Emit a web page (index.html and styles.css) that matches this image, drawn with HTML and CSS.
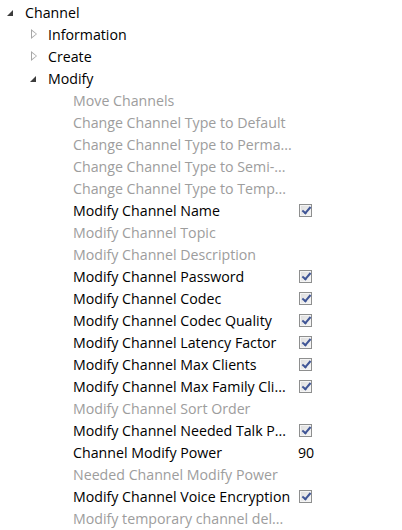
FILE: index.html
```html
<!DOCTYPE html>
<html lang="en">
<head>
  <meta charset="UTF-8" />
  <title>Permissions</title>
  <link rel="stylesheet" href="styles.css">
</head>
<body>

  <div class="tree">
    <div class="node level-0">
      <span class="arrow open"></span>
      <span class="name">Channel</span>
    </div>
    <div class="node level-1">
      <span class="arrow closed"></span>
      <span class="name">Information</span>
    </div>
    <div class="node level-1">
      <span class="arrow closed"></span>
      <span class="name">Create</span>
    </div>
    <div class="node level-1">
      <span class="arrow open"></span>
      <span class="name">Modify</span>
    </div>

    <!-- Modify permissions -->
    <div class="perm off"><span class="label">Move Channels</span></div>
    <div class="perm off"><span class="label">Change Channel Type to Default</span></div>
    <div class="perm off"><span class="label">Change Channel Type to Perma...</span></div>
    <div class="perm off"><span class="label">Change Channel Type to Semi-...</span></div>
    <div class="perm off"><span class="label">Change Channel Type to Temp...</span></div>
    <div class="perm"><span class="label">Modify Channel Name</span><span class="check"></span></div>
    <div class="perm off"><span class="label">Modify Channel Topic</span></div>
    <div class="perm off"><span class="label">Modify Channel Description</span></div>
    <div class="perm"><span class="label">Modify Channel Password</span><span class="check"></span></div>
    <div class="perm"><span class="label">Modify Channel Codec</span><span class="check"></span></div>
    <div class="perm"><span class="label">Modify Channel Codec Quality</span><span class="check"></span></div>
    <div class="perm"><span class="label">Modify Channel Latency Factor</span><span class="check"></span></div>
    <div class="perm"><span class="label">Modify Channel Max Clients</span><span class="check"></span></div>
    <div class="perm"><span class="label">Modify Channel Max Family Cli...</span><span class="check"></span></div>
    <div class="perm off"><span class="label">Modify Channel Sort Order</span></div>
    <div class="perm"><span class="label">Modify Channel Needed Talk P...</span><span class="check"></span></div>
    <div class="perm"><span class="label">Channel Modify Power</span><span class="value">90</span></div>
    <div class="perm off"><span class="label">Needed Channel Modify Power</span></div>
    <div class="perm"><span class="label">Modify Channel Voice Encryption</span><span class="check"></span></div>
    <div class="perm off"><span class="label">Modify temporary channel del...</span></div>
  </div>

</body>
</html>
```

FILE: styles.css
```css
body {
  margin: 0;
  background: #fff;
  font-family: "Open Sans", "Noto Sans", sans-serif;
  font-size: 14.2px;
  color: #000;
}
.tree {
  padding-top: 1px;
}
.node,
.perm {
  display: flex;
  align-items: center;
  height: 22px;
  white-space: nowrap;
}
.level-0 {
  padding-left: 5px;
}
.level-1 {
  padding-left: 28px;
}
.arrow {
  width: 20px;
  height: 22px;
  position: relative;
}
.arrow.closed::before {
  content: "";
  position: absolute;
  left: 3px;
  top: 6px;
  width: 0;
  height: 0;
  border-top: 5px solid transparent;
  border-bottom: 5px solid transparent;
  border-left: 6px solid #a6a6a6;
}
.arrow.closed::after {
  content: "";
  position: absolute;
  left: 4px;
  top: 8px;
  width: 0;
  height: 0;
  border-top: 3px solid transparent;
  border-bottom: 3px solid transparent;
  border-left: 4px solid #fff;
}
.arrow.open::before {
  content: "";
  position: absolute;
  left: 2px;
  top: 9px;
  width: 0;
  height: 0;
  border-left: 6px solid transparent;
  border-bottom: 6px solid #3c3c3c;
}
.perm {
  padding-left: 73px;
}
.perm .label {
  width: 225px;
  overflow: hidden;
}
.perm.off .label {
  color: #9d9d9d;
}
.check {
  width: 11px;
  height: 11px;
  margin-left: 1px;
  border: 1px solid #8e8f8f;
  background: linear-gradient(135deg, #dcdcdc, #f6f6f6);
  box-shadow: inset 0 0 0 1px #f4f4f4;
  position: relative;
}
.check::after {
  content: "";
  position: absolute;
  left: 4px;
  top: 0;
  width: 3px;
  height: 7px;
  border-right: 2px solid #3f5596;
  border-bottom: 2px solid #3f5596;
  transform: rotate(40deg);
}
```
